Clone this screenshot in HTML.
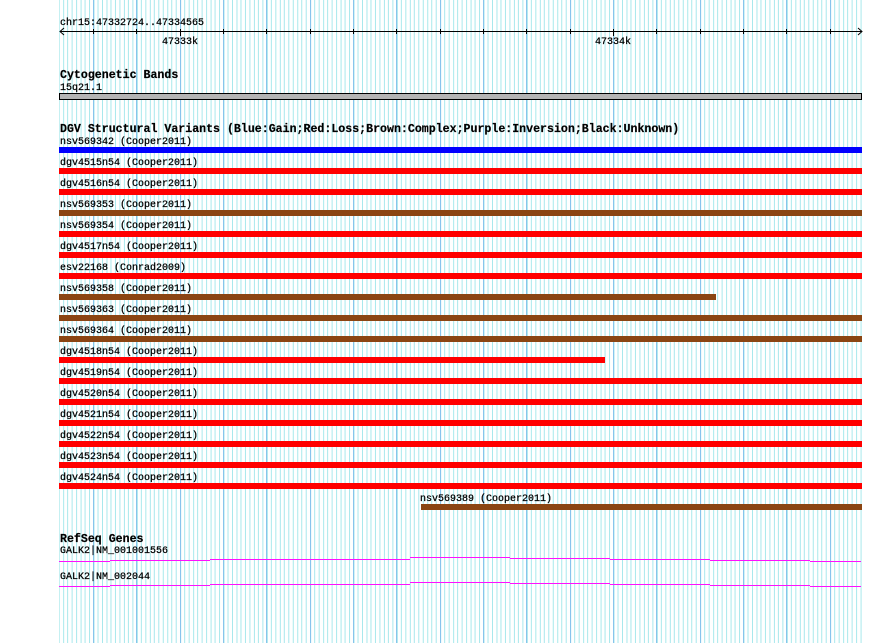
<!DOCTYPE html>
<html><head><meta charset="utf-8"><style>
html,body{margin:0;padding:0;background:#fff;width:890px;height:643px;overflow:hidden}
svg{display:block}
text{font-family:"Liberation Mono","DejaVu Sans Mono",monospace;font-size:10px;fill:#000;stroke:#000;stroke-width:0.25}
.b{font-weight:bold;font-size:11.6px;stroke-width:0.2}
</style></head><body>
<svg width="890" height="643" viewBox="0 0 890 643">
<defs>
<pattern id="g" patternUnits="userSpaceOnUse" x="58.67" y="0" width="43.333" height="643">
<g shape-rendering="crispEdges" stroke-width="1">
<line x1="0.5" y1="0" x2="0.5" y2="643" stroke="#a8e8ec"/>
<line x1="4.83" y1="0" x2="4.83" y2="643" stroke="#a8e8ec"/>
<line x1="9.17" y1="0" x2="9.17" y2="643" stroke="#a8e8ec"/>
<line x1="13.5" y1="0" x2="13.5" y2="643" stroke="#a8e8ec"/>
<line x1="17.83" y1="0" x2="17.83" y2="643" stroke="#a8e8ec"/>
<line x1="22.17" y1="0" x2="22.17" y2="643" stroke="#a8e8ec"/>
<line x1="26.5" y1="0" x2="26.5" y2="643" stroke="#a8e8ec"/>
<line x1="30.83" y1="0" x2="30.83" y2="643" stroke="#a8e8ec"/>
<line x1="35.17" y1="0" x2="35.17" y2="643" stroke="#a8e8ec"/>
<line x1="39.5" y1="0" x2="39.5" y2="643" stroke="#a8e8ec"/>
</g>
</pattern>
</defs>
<rect x="59" y="0" width="803" height="643" fill="url(#g)"/>
<g stroke="#88c4ec" shape-rendering="crispEdges">
<line x1="93.5" y1="0" x2="93.5" y2="643"/><line x1="136.5" y1="0" x2="136.5" y2="643"/><line x1="180.5" y1="0" x2="180.5" y2="643"/><line x1="223.5" y1="0" x2="223.5" y2="643"/><line x1="266.5" y1="0" x2="266.5" y2="643"/><line x1="310.5" y1="0" x2="310.5" y2="643"/><line x1="353.5" y1="0" x2="353.5" y2="643"/><line x1="396.5" y1="0" x2="396.5" y2="643"/><line x1="440.5" y1="0" x2="440.5" y2="643"/><line x1="483.5" y1="0" x2="483.5" y2="643"/><line x1="526.5" y1="0" x2="526.5" y2="643"/><line x1="570.5" y1="0" x2="570.5" y2="643"/><line x1="613.5" y1="0" x2="613.5" y2="643"/><line x1="656.5" y1="0" x2="656.5" y2="643"/><line x1="700.5" y1="0" x2="700.5" y2="643"/><line x1="743.5" y1="0" x2="743.5" y2="643"/><line x1="786.5" y1="0" x2="786.5" y2="643"/><line x1="830.5" y1="0" x2="830.5" y2="643"/>
</g>
<!-- ruler -->
<text x="60" y="25">chr15:47332724..47334565</text>
<g stroke="#000" shape-rendering="crispEdges">
<line x1="60" y1="31.5" x2="862" y2="31.5"/>
<line x1="93.5" y1="29" x2="93.5" y2="34"/><line x1="136.5" y1="29" x2="136.5" y2="34"/><line x1="180.5" y1="29" x2="180.5" y2="36"/><line x1="223.5" y1="29" x2="223.5" y2="34"/><line x1="266.5" y1="29" x2="266.5" y2="34"/><line x1="310.5" y1="29" x2="310.5" y2="34"/><line x1="353.5" y1="29" x2="353.5" y2="34"/><line x1="396.5" y1="29" x2="396.5" y2="34"/><line x1="440.5" y1="29" x2="440.5" y2="34"/><line x1="483.5" y1="29" x2="483.5" y2="34"/><line x1="526.5" y1="29" x2="526.5" y2="34"/><line x1="570.5" y1="29" x2="570.5" y2="34"/><line x1="613.5" y1="29" x2="613.5" y2="36"/><line x1="656.5" y1="29" x2="656.5" y2="34"/><line x1="700.5" y1="29" x2="700.5" y2="34"/><line x1="743.5" y1="29" x2="743.5" y2="34"/><line x1="786.5" y1="29" x2="786.5" y2="34"/><line x1="830.5" y1="29" x2="830.5" y2="34"/>
</g>
<path d="M64 28 L60 31.5 L64 35 M858 28 L862 31.5 L858 35" stroke="#000" fill="none"/>
<text x="162" y="44">47333k</text>
<text x="595" y="44">47334k</text>
<!-- cytobands -->
<text class="b" x="60" y="78">Cytogenetic Bands</text>
<text x="60" y="90">15q21.1</text>
<rect x="59.5" y="93.5" width="802" height="6" fill="#b4b4b4" stroke="#000"/>
<!-- DGV -->
<text class="b" x="60" y="132">DGV Structural Variants (Blue:Gain;Red:Loss;Brown:Complex;Purple:Inversion;Black:Unknown)</text>
<g shape-rendering="crispEdges">
<text x="60" y="144">nsv569342 (Cooper2011)</text><rect x="59" y="147" width="803" height="6" fill="#0000ff"/>
<text x="60" y="165">dgv4515n54 (Cooper2011)</text><rect x="59" y="168" width="803" height="6" fill="#ff0000"/>
<text x="60" y="186">dgv4516n54 (Cooper2011)</text><rect x="59" y="189" width="803" height="6" fill="#ff0000"/>
<text x="60" y="207">nsv569353 (Cooper2011)</text><rect x="59" y="210" width="803" height="6" fill="#8b4513"/>
<text x="60" y="228">nsv569354 (Cooper2011)</text><rect x="59" y="231" width="803" height="6" fill="#ff0000"/>
<text x="60" y="249">dgv4517n54 (Cooper2011)</text><rect x="59" y="252" width="803" height="6" fill="#ff0000"/>
<text x="60" y="270">esv22168 (Conrad2009)</text><rect x="59" y="273" width="803" height="6" fill="#ff0000"/>
<text x="60" y="291">nsv569358 (Cooper2011)</text><rect x="59" y="294" width="657" height="6" fill="#8b4513"/>
<text x="60" y="312">nsv569363 (Cooper2011)</text><rect x="59" y="315" width="803" height="6" fill="#8b4513"/>
<text x="60" y="333">nsv569364 (Cooper2011)</text><rect x="59" y="336" width="803" height="6" fill="#8b4513"/>
<text x="60" y="354">dgv4518n54 (Cooper2011)</text><rect x="59" y="357" width="546" height="6" fill="#ff0000"/>
<text x="60" y="375">dgv4519n54 (Cooper2011)</text><rect x="59" y="378" width="803" height="6" fill="#ff0000"/>
<text x="60" y="396">dgv4520n54 (Cooper2011)</text><rect x="59" y="399" width="803" height="6" fill="#ff0000"/>
<text x="60" y="417">dgv4521n54 (Cooper2011)</text><rect x="59" y="420" width="803" height="6" fill="#ff0000"/>
<text x="60" y="438">dgv4522n54 (Cooper2011)</text><rect x="59" y="441" width="803" height="6" fill="#ff0000"/>
<text x="60" y="459">dgv4523n54 (Cooper2011)</text><rect x="59" y="462" width="803" height="6" fill="#ff0000"/>
<text x="60" y="480">dgv4524n54 (Cooper2011)</text><rect x="59" y="483" width="803" height="6" fill="#ff0000"/>
<text x="420" y="501">nsv569389 (Cooper2011)</text><rect x="421" y="504" width="441" height="6" fill="#8b4513"/>
</g>
<!-- RefSeq -->
<text class="b" x="60" y="542">RefSeq Genes</text>
<text x="60" y="553">GALK2|NM_001001556</text>
<text x="60" y="579">GALK2|NM_002044</text>
<g fill="#ff10ff" shape-rendering="crispEdges">
<rect x="59" y="561" width="51" height="1"/><rect x="110" y="560" width="100" height="1"/><rect x="210" y="559" width="200" height="1"/><rect x="410" y="557" width="100" height="1"/><rect x="510" y="558" width="100" height="1"/><rect x="610" y="559" width="100" height="1"/><rect x="710" y="560" width="100" height="1"/><rect x="810" y="561" width="51" height="1"/>
<rect x="59" y="586" width="51" height="1"/><rect x="110" y="585" width="100" height="1"/><rect x="210" y="584" width="200" height="1"/><rect x="410" y="582" width="100" height="1"/><rect x="510" y="583" width="100" height="1"/><rect x="610" y="584" width="100" height="1"/><rect x="710" y="585" width="100" height="1"/><rect x="810" y="586" width="51" height="1"/>
</g>
</svg>
</body></html>
